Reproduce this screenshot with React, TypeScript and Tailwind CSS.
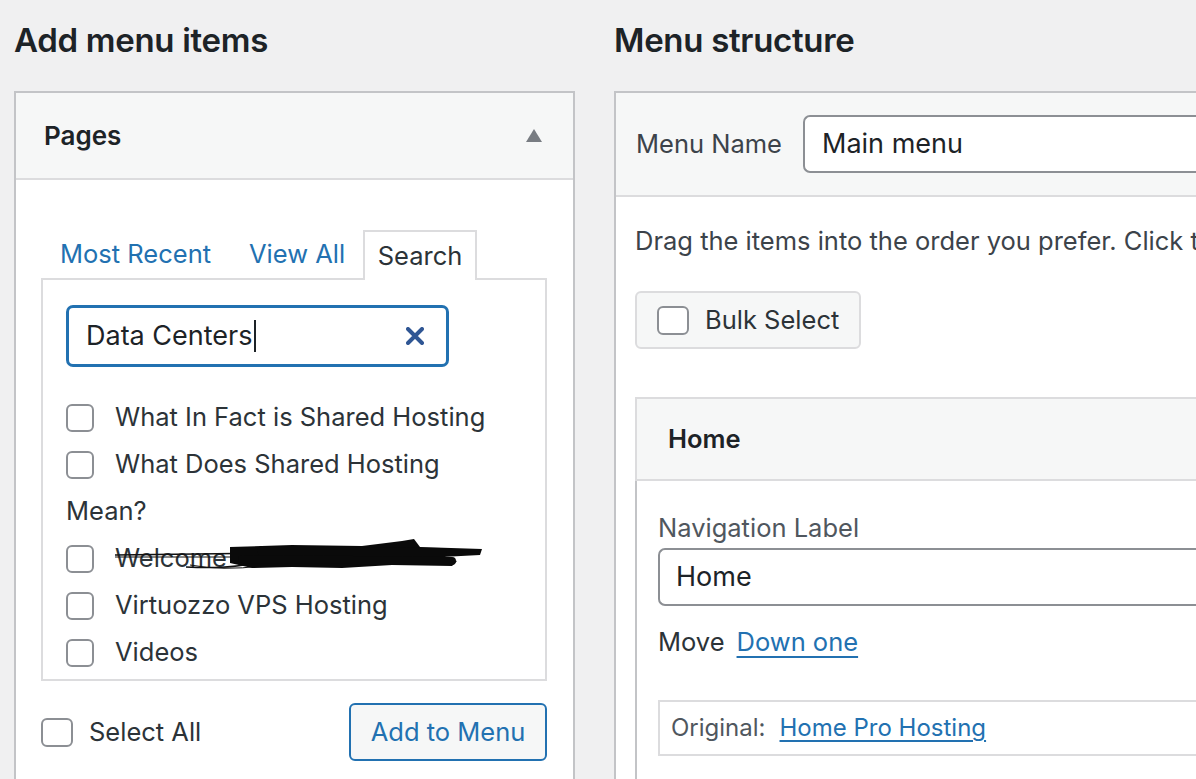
import React from "react";

const font = { fontFamily: "Inter, 'Noto Sans', sans-serif" };

function Box({ className = "" }: { className?: string }) {
  return (
    <span
      className={
        "inline-block w-[28px] h-[28px] rounded-[6px] border-2 border-[#8c8f94] bg-white shrink-0 " +
        className
      }
    />
  );
}

function Row({ children, box = true }: { children: React.ReactNode; box?: boolean }) {
  return (
    <div className="h-[47px] flex items-center">
      {box && <Box className="mr-[21px]" />}
      <span className="text-[25.5px] text-[#2c3338]">{children}</span>
    </div>
  );
}

export default function App() {
  return (
    <div
      className="w-[1196px] h-[779px] overflow-hidden bg-[#f0f0f1] flex pl-[14px] text-[#1d2327]"
      style={font}
    >
      {/* Left column */}
      <div className="w-[561px] shrink-0 flex flex-col">
        <div className="h-[91px] shrink-0 flex items-start pt-[17px]">
          <h2 className="text-[33px] font-semibold tracking-[-0.3px] leading-[46px]">Add menu items</h2>
        </div>
        <div className="flex-1 border-2 border-b-0 border-[#c3c4c7] bg-white flex flex-col">
          <div className="h-[87px] shrink-0 bg-[#f6f7f7] border-b-2 border-[#dcdcde] flex items-center justify-between pl-[28px] pr-[31px]">
            <span className="text-[26px] font-semibold text-[#1d2327]">Pages</span>
            <svg width="16" height="13" viewBox="0 0 16 13">
              <path d="M8 0 L16 13 L0 13 Z" fill="#787c82" />
            </svg>
          </div>
          <div className="pl-[25px] pr-[26px] pt-[50px]">
            <div className="flex items-end h-[48px]">
              <span className="w-[208px] pl-[19px] text-[25.5px] text-[#2271b1] leading-[48px]">Most Recent</span>
              <span className="w-[114px] text-[25.5px] text-[#2271b1] leading-[48px]">View All</span>
              <span className="w-[114px] h-[50px] -mb-[2px] border-2 border-b-0 border-[#dcdcde] bg-white text-[25.5px] text-[#2c3338] flex items-center justify-center relative z-10">
                Search
              </span>
            </div>
            <div className="h-[403px] border-2 border-[#dcdcde] pl-[23px] pt-[25px]">
              <div className="w-[383px] h-[62px] border-[3px] border-[#2271b1] rounded-[7px] flex items-center justify-between pl-[17px] pr-[22px]">
                <span className="text-[27px] text-[#1d2327] flex items-center">
                  Data Centers
                  <span className="inline-block w-[2px] h-[32px] bg-[#1d2327] ml-[1px]" />
                </span>
                <svg width="18" height="18" viewBox="0 0 18 18">
                  <path d="M2 2 L16 16 M16 2 L2 16" stroke="#2f5694" strokeWidth="4" strokeLinecap="round" />
                </svg>
              </div>
              <div className="mt-[27px] flex flex-col">
                <Row>What In Fact is Shared Hosting</Row>
                <Row>What Does Shared Hosting</Row>
                <Row box={false}>Mean?</Row>
                <div className="h-[47px] flex items-center relative">
                  <Box className="mr-[21px]" />
                  <span className="text-[25.5px] text-[#2c3338]">Welcome</span>
                  <svg
                    className="absolute left-[46px] top-[0px]"
                    width="370"
                    height="47"
                    viewBox="0 0 370 47"
                  >
                    <path d="M3 20 L168 18" stroke="#111" strokeWidth="1.5" fill="none" />
                    <path d="M3 22 L150 22" stroke="#111" strokeWidth="1" fill="none" />
                    <path d="M74 32 Q 120 34 140 28" stroke="#111" strokeWidth="1.5" fill="none" />
                    <path d="M78 30 Q 110 36 150 31" stroke="#111" strokeWidth="1" fill="none" />
                    <path
                      d="M118 12 L180 10 L250 11 L290 6 L302 4 L308 12 L370 14 L368 20 L330 22 L345 26 L340 31 L280 30 L230 33 L180 32 L140 33 L118 28 Z"
                      fill="#0a0a0a"
                    />
                    <path d="M150 16 L330 18" stroke="#0a0a0a" strokeWidth="10" strokeLinecap="round" />
                    <path d="M130 24 L340 26" stroke="#0a0a0a" strokeWidth="8" strokeLinecap="round" />
                  </svg>
                </div>
                <Row>Virtuozzo VPS Hosting</Row>
                <Row>Videos</Row>
              </div>
            </div>
            <div className="mt-[22px] flex items-center justify-between">
              <div className="flex items-center">
                <Box className="w-[32px] h-[29px] mr-[16px]" />
                <span className="text-[25.5px] text-[#2c3338]">Select All</span>
              </div>
              <button className="w-[198px] h-[58px] border-2 border-[#2271b1] bg-[#f6f7f7] rounded-[6px] text-[25.5px] text-[#2271b1]">
                Add to Menu
              </button>
            </div>
          </div>
        </div>
      </div>

      {/* Right column */}
      <div className="ml-[39px] w-[700px] shrink-0 flex flex-col">
        <div className="h-[91px] shrink-0 flex items-start pt-[17px]">
          <h2 className="text-[33px] font-semibold tracking-[-0.3px] leading-[46px]">Menu structure</h2>
        </div>
        <div className="flex-1 min-h-0 border-2 border-b-0 border-r-0 border-[#c3c4c7] bg-white flex flex-col">
          <div className="h-[104px] shrink-0 bg-[#f6f7f7] border-b-2 border-[#dcdcde] flex items-center pl-[20px]">
            <span className="text-[25.5px] text-[#3c434a] w-[167px]">Menu Name</span>
            <div className="flex-1 h-[58px] border-2 border-[#8c8f94] border-r-0 rounded-l-[7px] bg-white flex items-center pl-[17px]">
              <span className="text-[27px] text-[#1d2327]">Main menu</span>
            </div>
          </div>
          <div className="pl-[19px] flex flex-col shrink-0">
            <div className="h-[94px] flex items-end pb-[31px] whitespace-nowrap">
              <span className="text-[25.5px] text-[#3c434a]">Drag the items into the order you prefer. Click the</span>
            </div>
            <div className="w-[226px] h-[58px] border-2 border-[#dcdcde] rounded-[6px] bg-[#f6f7f7] flex items-center pl-[20px]">
              <Box className="w-[32px] h-[29px] mr-[16px]" />
              <span className="text-[25.5px] text-[#2c3338]">Bulk Select</span>
            </div>
            <div className="mt-[48px] border-2 border-r-0 border-[#dcdcde] bg-[#f6f7f7] h-[84px] flex items-center pl-[31px]">
              <span className="text-[25.5px] font-semibold text-[#1d2327]">Home</span>
            </div>
            <div className="border-l-2 border-[#c3c4c7] h-[320px] pl-[21px] pt-[29px] flex flex-col">
              <span className="text-[25.5px] text-[#50575e] leading-[36px]">Navigation Label</span>
              <div className="mt-[2px] h-[58px] border-2 border-r-0 border-[#8c8f94] rounded-l-[7px] bg-white flex items-center pl-[16px]">
                <span className="text-[27px] text-[#1d2327]">Home</span>
              </div>
              <div className="mt-[17px] flex items-center text-[25.5px]">
                <span className="text-[#2c3338]">Move</span>
                <span className="ml-[12px] text-[#2271b1] underline underline-offset-[5px]">Down one</span>
              </div>
              <div className="mt-[39px] h-[56px] border-2 border-r-0 border-[#dcdcde] flex items-center pl-[11px] text-[24px]">
                <span className="text-[#50575e]">Original:</span>
                <span className="ml-[14px] text-[#2271b1] underline underline-offset-[4px]">Home Pro Hosting</span>
              </div>
            </div>
          </div>
        </div>
      </div>
    </div>
  );
}
